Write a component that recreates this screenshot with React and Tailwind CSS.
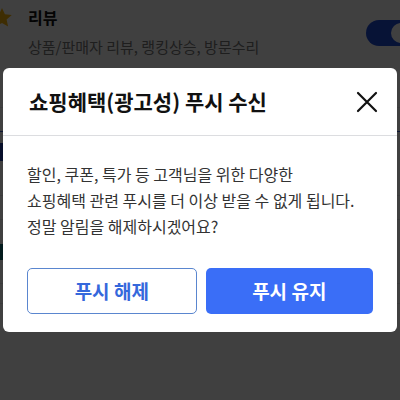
import React from "react";

const font = { fontFamily: '"Noto Sans CJK KR", "Noto Sans", sans-serif' };

const Toggle = ({ on }) => (
  <div className={`w-[48px] h-[26px] rounded-full flex items-center px-[3px] ${on ? "bg-[#1e4bd8] justify-end" : "bg-[#d5d8dd] justify-start"}`}>
    <div className="w-[20px] h-[20px] rounded-full bg-white" />
  </div>
);

const App = () => {
  return (
    <div className="relative w-[400px] h-[400px] overflow-hidden bg-white" style={font}>
      {/* settings list underneath */}
      <div className="flex flex-col">
        <div className="flex items-start pt-[2px] pb-[10px]">
          <div className="w-[28px] flex justify-start pt-[4px]">
            <svg width="24" height="24" viewBox="0 0 24 24" className="-ml-[10px]">
              <path d="M12 2l2.9 6.3 6.9.7-5.2 4.6 1.5 6.8L12 17l-6.1 3.4 1.5-6.8L2.2 9l6.9-.7z" fill="#f6b40e" />
            </svg>
          </div>
          <div className="flex-1 flex flex-col">
            <span className="text-[16px] font-bold text-[#111] leading-[26px] pt-[2px]">리뷰</span>
            <span className="text-[15px] text-[#777] leading-[22px] mt-[6px]">상품/판매자 리뷰, 랭킹상승, 방문수리</span>
          </div>
          <div className="pt-[18px] -mr-[14px]">
            <Toggle on />
          </div>
        </div>
        <div className="h-[40px] border-b border-[#e5e7eb]" />
        <div className="h-[24px] border-b border-[#3a5bd0]" />
        <div className="h-[40px] flex items-center">
          <div className="w-[6px] h-[18px] bg-[#1e3fa8]" />
        </div>
        <div className="h-[24px] border-b border-[#e5e7eb]" />
        <div className="h-[24px] border-b border-[#e5e7eb]" />
        <div className="h-[64px] flex items-center border-b border-[#e5e7eb]">
          <div className="w-[6px] h-[16px] bg-[#0f6b73]" />
        </div>
        <div className="h-[20px] border-b border-[#e5e7eb]" />
      </div>

      {/* dimmed backdrop + dialog */}
      <div className="absolute inset-0 bg-black/75 flex items-center justify-center">
        <div className="w-[394px] bg-white rounded-[6px] flex flex-col">
          <div className="h-[68px] flex items-center justify-between pl-[26px] pr-[16px] border-b border-[#dcdde0]">
            <h2 className="text-[21px] font-bold text-[#111]">쇼핑혜택(광고성) 푸시 수신</h2>
            <svg width="28" height="28" viewBox="0 0 28 28">
              <path d="M5 5L23 23M23 5L5 23" stroke="#111" strokeWidth="2.2" strokeLinecap="round" />
            </svg>
          </div>
          <div className="px-6 pt-[25px] pb-[18px]">
            <p className="text-[16px] leading-[26px] text-[#333]">
              할인, 쿠폰, 특가 등 고객님을 위한 다양한
              <br />
              쇼핑혜택 관련 푸시를 더 이상 받을 수 없게 됩니다.
              <br />
              정말 알림을 해제하시겠어요?
            </p>
            <div className="flex gap-[9px] mt-[29px]">
              <button className="flex-1 h-[46px] rounded-[5px] border border-[#5a86cf] bg-white text-[#3568dc] text-[19px] font-bold">
                푸시 해제
              </button>
              <button className="flex-1 h-[46px] rounded-[5px] bg-[#3a6ef7] text-white text-[19px] font-bold">
                푸시 유지
              </button>
            </div>
          </div>
        </div>
      </div>
    </div>
  );
};

export default App;
